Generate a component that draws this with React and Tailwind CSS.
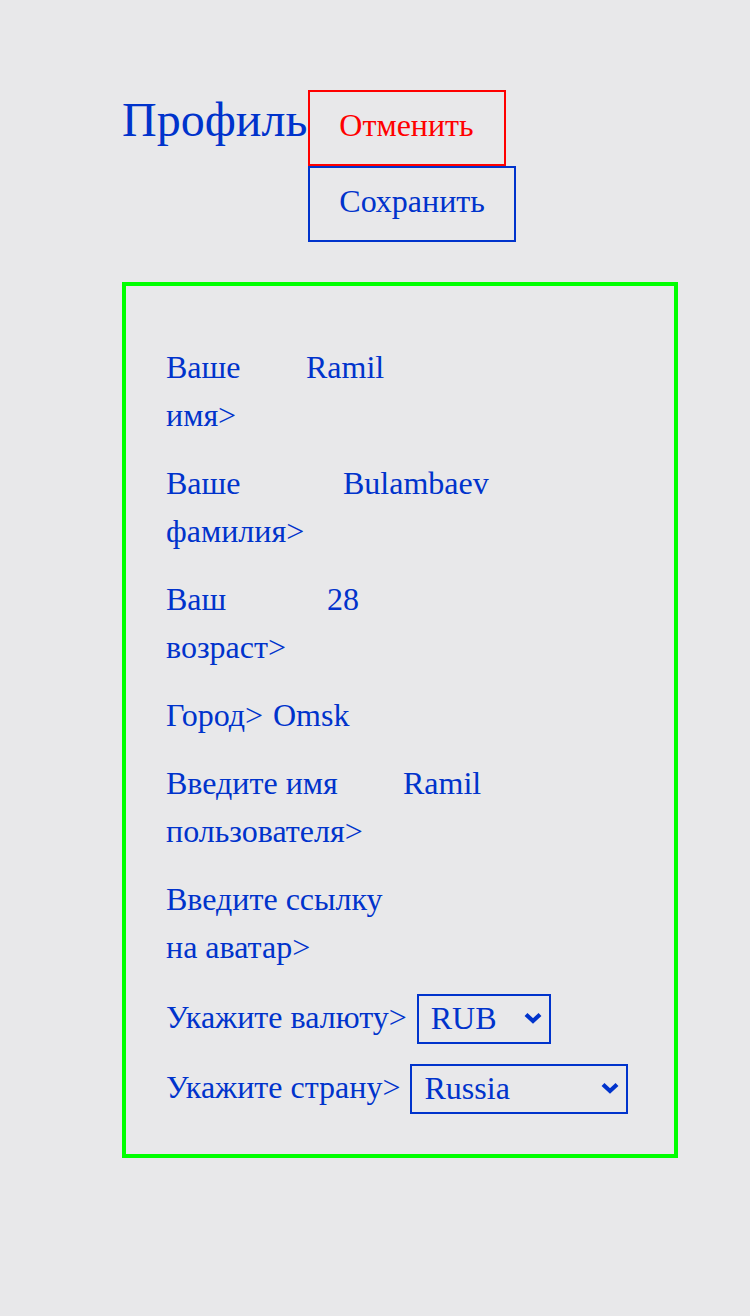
import { useState } from "react";

const font = "font-['Liberation_Serif',serif]";

function Field({ label, value, labelW }) {
  return (
    <label className="flex items-start">
      <span className={`${labelW} shrink-0`}>{label}</span>
      <input
        defaultValue={value}
        className="flex-1 min-w-0 h-[48px] bg-transparent border-0 outline-none p-0 text-[#0033cc] leading-[48px]"
      />
    </label>
  );
}

function Select({ label, value, options, w, first }) {
  return (
    <label className={`flex items-center gap-[10px] ${first ? "mt-[3px]" : ""}`}>
      <span className="leading-[44px] mb-[4px]">{label}</span>
      <span className={`relative ${w}`}>
        <select
          defaultValue={value}
          className="appearance-none w-full h-[50px] border-2 border-[#0033cc] bg-transparent pl-[12px] pr-8 text-[#0033cc] leading-[44px] pb-[2px] outline-none"
        >
          {options.map((o) => (
            <option key={o}>{o}</option>
          ))}
        </select>
        <svg
          className="pointer-events-none absolute right-[8px] top-[18px]"
          width="20"
          height="12"
          viewBox="0 0 20 12"
        >
          <polyline points="3,2.5 10,9 17,2.5" fill="none" stroke="#0033cc" strokeWidth="4.2" />
        </svg>
      </span>
    </label>
  );
}

export default function App() {
  const [saved, setSaved] = useState(false);

  return (
    <div className={`min-h-[1316px] bg-[#e8e8ea] text-[#0033cc] ${font} text-[32px] leading-[48px] pt-[90px]`}>
      <div className="ml-[122px] w-[556px]">
        {/* header: title + buttons */}
        <div className="flex items-baseline">
          <h1 className="text-[48px] leading-none">Профиль</h1>
          <div className="flex flex-col items-start ml-px">
            <button className="border-2 border-[#ff0000] text-[#ff0000] pl-[29px] pr-[30px] pt-[9px] pb-[15px]">Отменить</button>
            <button onClick={() => setSaved(!saved)} className="border-2 border-[#0033cc] px-[29px] pt-[9px] pb-[15px]">Сохранить</button>
          </div>
        </div>

        {/* form */}
        <form className="mt-[40px] border-4 border-[#00ff00] pl-[40px] pr-[40px] pt-[57px] pb-[40px] flex flex-col gap-[20px]">
          <Field label="Ваше имя>" value="Ramil" labelW="w-[140px]" />
          <Field label="Ваше фамилия>" value="Bulambaev" labelW="w-[177px]" />
          <Field label="Ваш возраст>" value="28" labelW="w-[161px]" />
          <Field label="Город>" value="Omsk" labelW="w-[107px]" />
          <Field label="Введите имя пользователя>" value="Ramil" labelW="w-[237px]" />
          <Field label="Введите ссылку на аватар>" value="" labelW="w-[230px]" />
          <Select first label="Укажите валюту>" value="RUB" options={["RUB", "USD", "EUR"]} w="w-[134px]" />
          <Select label="Укажите страну>" value="Russia" options={["Russia", "Kazakhstan"]} w="w-[218px]" />
        </form>
      </div>
    </div>
  );
}
